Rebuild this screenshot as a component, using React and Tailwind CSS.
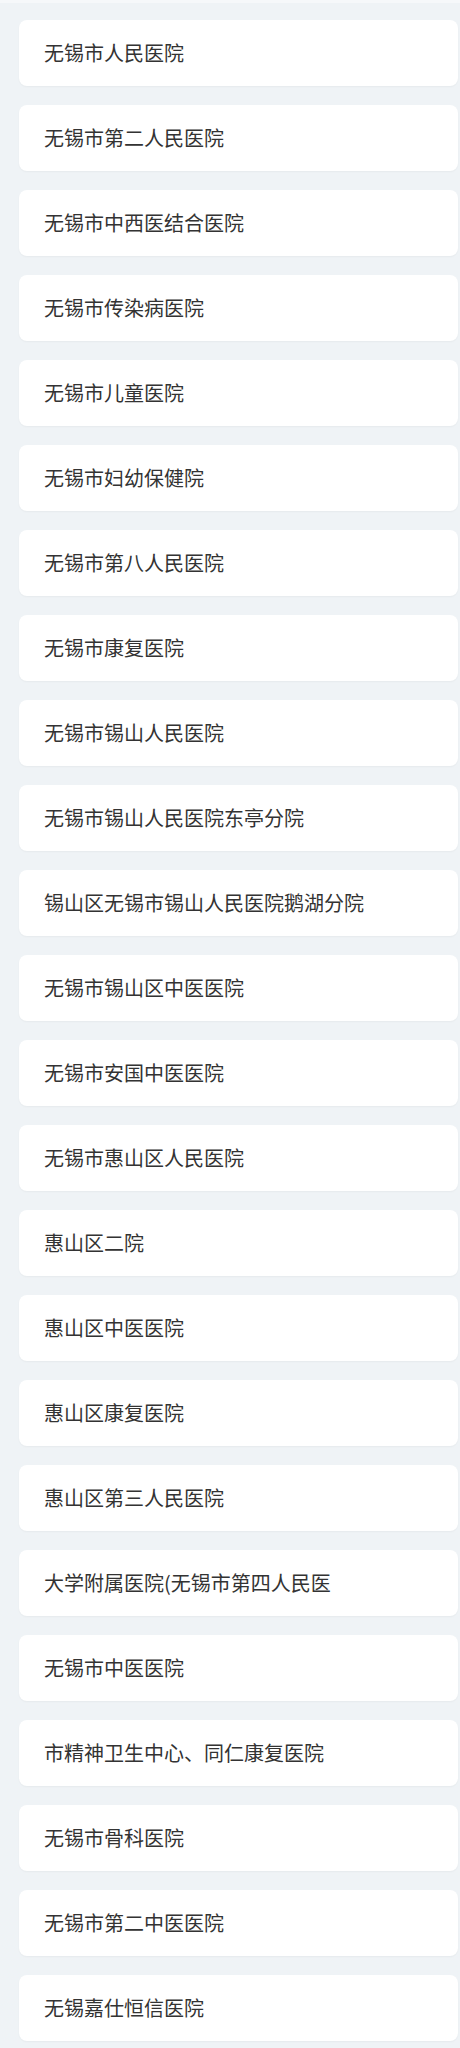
import React from 'react';

const hospitals = [
  '无锡市人民医院',
  '无锡市第二人民医院',
  '无锡市中西医结合医院',
  '无锡市传染病医院',
  '无锡市儿童医院',
  '无锡市妇幼保健院',
  '无锡市第八人民医院',
  '无锡市康复医院',
  '无锡市锡山人民医院',
  '无锡市锡山人民医院东亭分院',
  '锡山区无锡市锡山人民医院鹅湖分院',
  '无锡市锡山区中医医院',
  '无锡市安国中医医院',
  '无锡市惠山区人民医院',
  '惠山区二院',
  '惠山区中医医院',
  '惠山区康复医院',
  '惠山区第三人民医院',
  '大学附属医院(无锡市第四人民医',
  '无锡市中医医院',
  '市精神卫生中心、同仁康复医院',
  '无锡市骨科医院',
  '无锡市第二中医医院',
  '无锡嘉仕恒信医院',
];

export default function App() {
  return (
    <div className="min-h-[2048px] w-[460px] bg-[#eff3f6] border-t-[3px] border-[#f6f8fa] font-['Noto_Sans_CJK_SC','Noto_Sans',sans-serif]">
      <div className="flex flex-col gap-[19px] pt-[17px] pl-[19px] pr-[2px]">
        {hospitals.map(name => (
          <div
            key={name}
            className="h-[66px] flex items-center pl-[25px] bg-white rounded-[8px] shadow-[0_1px_2px_rgba(0,0,0,0.04)] overflow-hidden"
          >
            <span className="text-[20px] leading-none text-[#333] whitespace-nowrap">{name}</span>
          </div>
        ))}
      </div>
    </div>
  );
}
